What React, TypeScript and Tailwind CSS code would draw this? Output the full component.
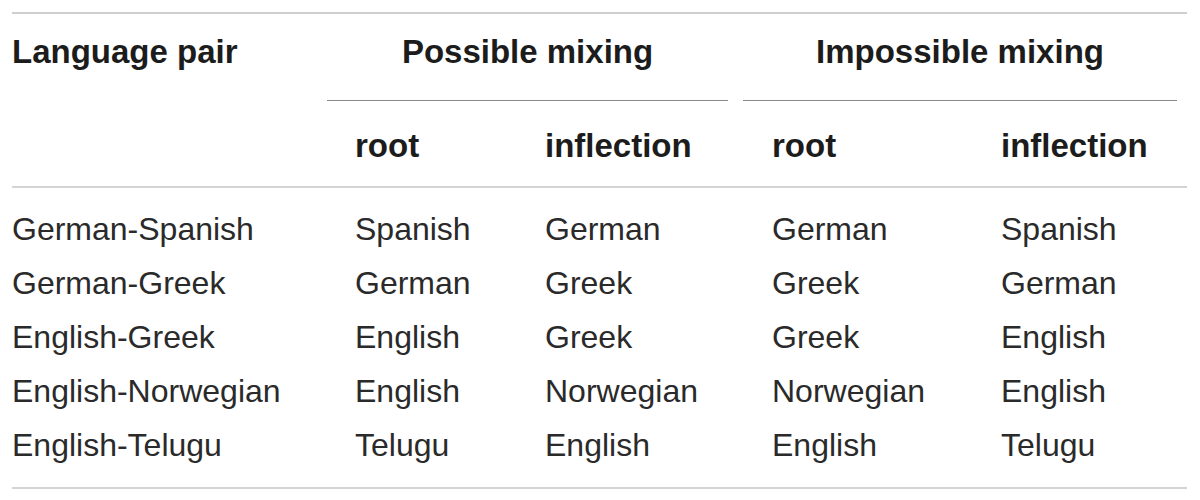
import React from "react";

const rows: string[][] = [
  ["German-Spanish", "Spanish", "German", "German", "Spanish"],
  ["German-Greek", "German", "Greek", "Greek", "German"],
  ["English-Greek", "English", "Greek", "Greek", "English"],
  ["English-Norwegian", "English", "Norwegian", "Norwegian", "English"],
  ["English-Telugu", "Telugu", "English", "English", "Telugu"],
];

const grid = "grid grid-cols-[315px_190px_226px_229px_215px]";

export default function App() {
  return (
    <div className="w-[1200px] h-[500px] bg-white font-['Liberation_Sans',Arial,sans-serif] overflow-hidden">
      <div className="ml-[12px] w-[1175px] pt-[12px]">
        <div className="h-[2px] bg-[#cfcfcf]" />
        {/* header row 1 */}
        <div className={grid}>
          <div className="pt-[20px] text-[33px] leading-[36px] font-bold text-[#1c1c1c]">
            Language pair
          </div>
          <div className="col-span-2 pt-[20px]">
            <div className="mr-[15px] border-b border-[#8a8a8a] pb-[30px] text-center text-[33px] leading-[36px] font-bold text-[#1c1c1c]">
              Possible mixing
            </div>
          </div>
          <div className="col-span-2 pt-[20px]">
            <div className="mr-[10px] border-b border-[#8a8a8a] pb-[30px] text-center text-[33px] leading-[36px] font-bold text-[#1c1c1c]">
              Impossible mixing
            </div>
          </div>
        </div>
        {/* header row 2 */}
        <div className={`${grid} pt-[27px] pb-[22px] text-[33px] leading-[36px] font-bold text-[#1c1c1c]`}>
          <div />
          <div className="pl-[28px]">root</div>
          <div className="pl-[28px]">inflection</div>
          <div className="pl-[29px]">root</div>
          <div className="pl-[29px]">inflection</div>
        </div>
        <div className="h-[2px] bg-[#d4d4d4]" />
        <div className="pt-[14px] pb-[15px]">
          {rows.map((r) => (
            <div key={r[0]} className={`${grid} text-[32px] leading-[54px] text-[#2a2a2a]`}>
              <div>{r[0]}</div>
              <div className="pl-[28px]">{r[1]}</div>
              <div className="pl-[28px]">{r[2]}</div>
              <div className="pl-[29px]">{r[3]}</div>
              <div className="pl-[29px]">{r[4]}</div>
            </div>
          ))}
        </div>
        <div className="h-[2px] bg-[#d4d4d4]" />
      </div>
    </div>
  );
}
